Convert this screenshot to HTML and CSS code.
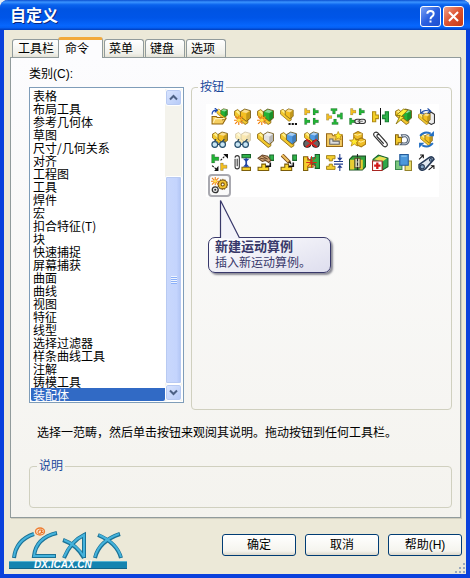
FILE: index.html
```html
<!DOCTYPE html>
<html lang="zh-CN">
<head>
    <meta charset="UTF-8">
    <meta name="viewport" content="width=device-width, initial-scale=1.0">
    <title>自定义</title>
    <link rel="stylesheet" href="styles.css">
</head>
<body>

    <!-- Shared icon pieces -->
    <svg class="defs" aria-hidden="true">
        <symbol id="part" viewBox="0 0 16 16">
            <path d="M.5 3l3-1.500L13 10v4l-2.500 1.500L.5 7z" fill="#f3c92f" stroke="#876310" stroke-width=".8"/>
            <path d="M1.500 3.200L10.500 11l2-1L3.500 2z" fill="#fff08c"/>
            <path d="M6 3.500l4-2.500 5.500 1.500v7l-4 3L6 8z" fill="currentColor" stroke="#6b5210" stroke-width=".8"/>
            <path d="M7 3.700l3.200-2.200 4.300 1.300-3 2z" fill="#fff" opacity=".5"/>
            <path d="M11.500 5.500v6.500l3.500-2.700V3z" opacity=".2"/>
        </symbol>
        <symbol id="tee" viewBox="0 0 7 8">
            <path d="M.5.5h2.500v2h3.500v3H3v2H.5z" fill="currentColor" stroke="#222" stroke-opacity=".4" stroke-width=".6"/>
        </symbol>
        <symbol id="spark" viewBox="0 0 9 9">
            <path d="M4.500 0v9M0 4.500h9M1 1l7 7M8 1L1 8" stroke="#f08010" stroke-width="1.100"/>
            <circle cx="4.500" cy="4.500" r="1.700" fill="#ffe14a"/>
        </symbol>
        <symbol id="glasses" viewBox="0 0 13 8">
            <path d="M2 4L4 .5M8 4l3-3.500M5 5h2" fill="none" stroke="#27425c"/>
            <circle cx="3" cy="5" r="2.400" fill="#c9e6f4" stroke="#27506e"/>
            <circle cx="9.500" cy="5" r="2.400" fill="#c9e6f4" stroke="#27506e"/>
        </symbol>
        <symbol id="star" viewBox="0 0 10 10">
            <path d="M5 .5l1.300 3 3.200.2L7 5.800l1 3.400-3-1.900-3 1.900 1-3.400L.5 3.700l3.200-.2z" fill="#ffe92e" stroke="#ad7a06" stroke-width=".7"/>
        </symbol>
        <symbol id="clip" viewBox="0 0 6 15">
            <path d="M1 4v7.500a2 2 0 004 0V3a2 2 0 00-4 0M3 4v7" fill="none" stroke="#333"/>
        </symbol>
        <symbol id="stairs" viewBox="0 0 15 10">
            <path d="M1 9.500v-3h3.500v-3H8v3h3v3z" fill="#f9d72f" stroke="#7b5c08"/>
            <path d="M8.500 5.500h4V2" fill="none" stroke="#111" stroke-width="1.500"/>
        </symbol>
    </svg>

    <div class="window">
        <header class="titlebar">
            <h1>自定义</h1>
            <button class="win-btn help" type="button" aria-label="帮助">
                <svg viewBox="0 0 21 21"><path d="M7 7.500q0-3 3.500-3t3.500 3q0 2-2 3.200-1.500 1-1.500 2.800M10.500 15v2.200" fill="none" stroke="#fff" stroke-width="2.200"/></svg>
            </button>
            <button class="win-btn close" type="button" aria-label="关闭">
                <svg viewBox="0 0 21 21"><path d="M5.500 5.500l10 10M15.500 5.500l-10 10" stroke="#fff" stroke-width="2.300"/></svg>
            </button>
        </header>

        <main>
            <div class="tabs" role="tablist">
                <button class="tab" role="tab" type="button">工具栏</button>
                <button class="tab active" role="tab" type="button" aria-selected="true">命令</button>
                <button class="tab" role="tab" type="button">菜单</button>
                <button class="tab" role="tab" type="button">键盘</button>
                <button class="tab" role="tab" type="button">选项</button>
            </div>

            <section class="panel">
                <div class="columns">
                    <div class="categories">
                        <label for="category">类别(C):</label>
                        <div class="listbox">
                            <select id="category" size="24">
                                <option>表格</option>
                                <option>布局工具</option>
                                <option>参考几何体</option>
                                <option>草图</option>
                                <option>尺寸/几何关系</option>
                                <option>对齐</option>
                                <option>工程图</option>
                                <option>工具</option>
                                <option>焊件</option>
                                <option>宏</option>
                                <option>扣合特征(T)</option>
                                <option>块</option>
                                <option>快速捕捉</option>
                                <option>屏幕捕获</option>
                                <option>曲面</option>
                                <option>曲线</option>
                                <option>视图</option>
                                <option>特征</option>
                                <option>线型</option>
                                <option>选择过滤器</option>
                                <option>样条曲线工具</option>
                                <option>注解</option>
                                <option>铸模工具</option>
                                <option selected>装配体</option>
                            </select>
                            <div class="scrollbar">
                                <button class="arrow" type="button" aria-label="向上"><svg viewBox="0 0 9 7"><path d="M1 5.500l3.500-3.500L8 5.500" fill="none" stroke="#4d6185" stroke-width="2"/></svg></button>
                                <div class="track"><div class="thumb"></div></div>
                                <button class="arrow" type="button" aria-label="向下"><svg viewBox="0 0 9 7"><path d="M1 1.500L4.500 5 8 1.500" fill="none" stroke="#4d6185" stroke-width="2"/></svg></button>
                            </div>
                        </div>
                    </div>

                    <fieldset class="commands">
                        <legend>按钮</legend>
                        <div class="icons">
                            <button type="button" aria-label="插入零部件"><svg viewBox="0 0 16 16"><use href="#part" class="green" x="5" width="11" height="11"/><path d="M1 15V8h4l1 1h5v2l3-1-3 5z" fill="#f6cf60" stroke="#91640d"/><path d="M2 14l2-4h9" fill="none" stroke="#fff2b8"/><path d="M1 6q0-4 4-4M3.500 0L6 2 3.500 4" fill="none" stroke="#1745b0"/></svg></button>
                            <button type="button" aria-label="新零件"><svg viewBox="0 0 16 16" class="yellow"><use href="#part"/><use href="#spark" x="0" y="7" width="9" height="9"/></svg></button>
                            <button type="button" aria-label="新装配体"><svg viewBox="0 0 16 16" class="green"><use href="#part"/><use href="#spark" x="0" y="7" width="9" height="9"/></svg></button>
                            <button type="button" aria-label="随配合复制"><svg viewBox="0 0 16 16" class="yellow"><use href="#part" width="13" height="13"/><path d="M8 14h2v2H8zM11 14h2v2h-2zM14 14h2v2h-2z" fill="#111"/></svg></button>
                            <button type="button" aria-label="线性阵列"><svg viewBox="0 0 16 16" class="green"><use href="#tee" class="yellow" x="1" width="6" height="7"/><use href="#tee" x="9" width="6" height="7"/><use href="#tee" x="1" y="9" width="6" height="7"/><use href="#tee" x="9" y="9" width="6" height="7"/></svg></button>
                            <button type="button" aria-label="圆周阵列"><svg viewBox="0 0 16 16" class="green"><use href="#tee" class="yellow" x="0" y="5" width="6" height="7"/><use href="#tee" x="0" y="5" width="6" height="7" transform="rotate(90 8 8)"/><use href="#tee" x="0" y="5" width="6" height="7" transform="rotate(180 8 8)"/><use href="#tee" x="0" y="5" width="6" height="7" transform="rotate(270 8 8)"/></svg></button>
                            <button type="button" aria-label="特征驱动阵列"><svg viewBox="0 0 16 16" class="green"><use href="#tee" class="yellow" x="1" width="6" height="7"/><use href="#tee" x="9" width="6" height="7"/><use href="#tee" x="0" y="9" width="6" height="7"/><rect x="5.500" y="10.500" width="6" height="4" rx="2" fill="#eee" stroke="#333"/><rect x="9.500" y="10.500" width="6" height="4" rx="2" fill="#eee" stroke="#333"/><path d="M8 12.500h5" stroke="#777"/></svg></button>
                            <button type="button" aria-label="镜向零部件"><svg viewBox="0 0 16 16"><path d="M.5 3.500h3v3H6v3.500H3.500v3h-3z" fill="#f4d028" stroke="#b08a12"/><path d="M15.500 3.500h-3v3H10v3.500h2.500v3h3z" fill="#2fb34a" stroke="#148030"/><path d="M8 0v16" stroke="#111" stroke-width="1"/></svg></button>
                            <button type="button" aria-label="智能零部件"><svg viewBox="0 0 16 16" class="green"><use href="#part"/><path d="M8 1L1 7h4l-4 8 8-7H6l6-6z" fill="#fff03b" stroke="#846c08" stroke-width=".8"/></svg></button>
                            <button type="button" aria-label="替换零部件"><svg viewBox="0 0 16 16"><path d="M9.500 6l3-2 3 2v8l-3 1.500-3-2z" fill="#eee" stroke="#333"/><use href="#part" class="yellow" y="4" width="12" height="12"/><path d="M3 5q2-4 8-2M2.500 1v4h3.500M9 .5l3 2.500-3 2" fill="none" stroke="#1b4aa1"/></svg></button>

                            <button type="button" aria-label="隐藏零部件"><svg viewBox="0 0 16 16" class="yellow"><use href="#part" x="1" width="15" height="15"/><use href="#glasses" x="0" y="7" width="15" height="9"/></svg></button>
                            <button type="button" aria-label="显示零部件"><svg viewBox="0 0 16 16" class="yellow"><g opacity=".35"><use href="#part" x="1" width="15" height="15"/></g><use href="#glasses" x="0" y="7" width="15" height="9"/></svg></button>
                            <button type="button" aria-label="压缩"><svg viewBox="0 0 16 16" class="white"><use href="#part"/></svg></button>
                            <button type="button" aria-label="解除压缩"><svg viewBox="0 0 16 16" class="blue"><use href="#part"/></svg></button>
                            <button type="button" aria-label="孤立"><svg viewBox="0 0 16 16" class="blue"><use href="#part" width="16" height="14"/><circle cx="4" cy="12" r="3.300" fill="#666" stroke="#222"/><circle cx="12" cy="12" r="3.300" fill="#666" stroke="#222"/><path d="M3 8l10 7M13 8L3 15" stroke="#d8201a" stroke-width="1.800"/></svg></button>
                            <button type="button" aria-label="编辑零部件"><svg viewBox="0 0 16 16"><path d="M.5 14.500v-12h5l1 2h9v10z" fill="#f5cb62" stroke="#966717"/><path d="M3.500 7.500h3v2h6v3h-9z" fill="#ddd" stroke="#666"/><use href="#star" x="7" width="9" height="9"/></svg></button>
                            <button type="button" aria-label="智能扣件"><svg viewBox="0 0 16 16"><g fill="#efbd27" stroke="#a87a12"><path d="M4.500 2.500l4-2 4 2v4l-4 2-4-2z"/><path d="M7.500 8.500l4-2 4 2v4l-4 2.500-4-2z"/></g><path d="M5 3l3 1 4-1.500M8 9l3 1.500L15 9" fill="none" stroke="#fff0a0"/><use href="#star" y="5" width="10" height="10"/></svg></button>
                            <button type="button" aria-label="配合"><svg viewBox="0 0 16 16"><path d="M12.500 9.500L5.500 1.800C3.500 0 .5 2 2 4.500l8.500 9.500c2 2 5 0 3.500-2.500L7 3.500C5.500 2.500 4 4 5 5.500l6 6.500" fill="none" stroke="#333" stroke-width="1.100"/></svg></button>
                            <button type="button" aria-label="磁力配合"><svg viewBox="0 0 16 16"><path d="M.5 3.500h2.500v2.500H6v5H3v2H.5z" fill="#f5cc31" stroke="#82610c"/><path d="M6 3.500h4a5 5 0 010 9.500H5l2-2q3 1 4.500-1 1-3-1.500-4.500-2-.5-3 .5z" fill="#e8edf3" stroke="#536275"/></svg></button>
                            <button type="button" aria-label="旋转零部件"><svg viewBox="0 0 16 16"><use href="#part" class="yellow" x="2" y="2" width="12" height="12"/><path d="M2 4.500q4-5 10-2M14 11.500q-4 5-10 2" fill="none" stroke="#2470c4" stroke-width="1.800"/><path d="M15 0v5h-5zM1 16v-5h5z" fill="#2470c4"/></svg></button>

                            <button type="button" aria-label="移动零部件"><svg viewBox="0 0 16 16"><use href="#tee" class="green" x="0" y="0" width="8" height="9"/><use href="#tee" class="yellow" x="8" y="8" width="8" height="8"/><path d="M9 6l5-5M1 11l5 4" fill="none" stroke="#111" stroke-dasharray="2 1"/><path d="M11.500 0H16v4.500zM7 11v5H3z" fill="#111"/></svg></button>
                            <button type="button" aria-label="高级配合"><svg viewBox="0 0 16 16"><use href="#clip" width="6" height="16"/><path d="M7.500.5h8v3h-8z" fill="#2fb34a" stroke="#176329"/><path d="M7.500 12.500h8v3h-8z" fill="#f5cf2e" stroke="#7e610b"/><path d="M11.500 4v8" stroke="#2346a3" stroke-width="1.600"/><path d="M8.500 4.500h6l-3 3zM8.500 12h6l-3-3z" fill="#2346a3"/></svg></button>
                            <button type="button" aria-label="拖动草图"><svg viewBox="0 0 16 16"><use href="#stairs" y="6" width="15" height="10"/><path d="M12 1h4v5h-4z" fill="#2fb34a" stroke="#176329"/><path d="M1 4l4-3 5 1 3 4-2 2-3-2-3 1z" fill="#d7aa79" stroke="#684629"/><path d="M3 4l5 1M5 2l5 3" stroke="#684629"/></svg></button>
                            <button type="button" aria-label="编辑草图"><svg viewBox="0 0 16 16"><use href="#stairs" y="6" width="15" height="10"/><path d="M12 1h4v5h-4z" fill="#2fb34a" stroke="#176329"/><path d="M2 1l7 7" stroke="#754615" stroke-width="3.500"/><path d="M2 1l6 6" stroke="#f1c35f" stroke-width="2"/><path d="M8 8l3 2-1-3z" fill="#222"/></svg></button>
                            <button type="button" aria-label="干涉检查"><svg viewBox="0 0 16 16"><path d="M.5 2.500h4v3h5v7h-5v3h-4z" fill="#f5cf2e" stroke="#7e610b"/><path d="M15.500.500h-4v3h-4v6h4v4h4z" fill="#2fb34a" stroke="#176329"/><path d="M4 3l8 9M12 3L4 12M8 2v11M3 8h10" stroke="#d92717" stroke-width=".9"/></svg></button>
                            <button type="button" aria-label="间隙验证"><svg viewBox="0 0 16 16"><path d="M.5 1.500h8v3h-2.500v2H3v-2H.5zM.5 14.500h8v-3h-2.500v-2H3v2H.5z" fill="#f5cf2e" stroke="#9a780f" stroke-width=".8"/><path d="M7.500 7h8.500M7.500 9.500h8.500M13 0v4M13 12v4" stroke="#203c8c"/><path d="M10.500 3.500h5L13 6.500zM10.500 13h5L13 10z" fill="#203c8c"/></svg></button>
                            <button type="button" aria-label="孔对齐"><svg viewBox="0 0 16 16"><path d="M.5 5l3-3h12v10l-3 3H.5z" fill="#2fa33f" stroke="#1a5123"/><path d="M1 5.500h4v9H1zM10 5.500h3v9h-3z" fill="#e8cd31"/><path d="M5.500 4h5v9h-5z" fill="#d6d6b9" stroke="#624f20"/><path d="M8 0v16" stroke="#222" stroke-dasharray="3 1"/></svg></button>
                            <button type="button" aria-label="装配体直观"><svg viewBox="0 0 16 16"><path d="M1 5l5-4 9 3v8l-5 3-9-2z" fill="#2fa84a" stroke="#195d2a"/><path d="M2 5l5-3 7 2-4 3z" fill="#eadf55"/><path d="M10 7v8" stroke="#195d2a"/><path d="M.5 6.500h9v9h-9z" fill="#fff" stroke="#a82722"/><path d="M5 8v6M2 11h6" stroke="#d51919" stroke-width="2.200"/></svg></button>
                            <button type="button" aria-label="布局"><svg viewBox="0 0 16 16"><path d="M.5 6.500h6v8h-6z" fill="#7cc880" stroke="#39864d"/><path d="M9.500 6.500h6v9h-6z" fill="#ebdf6d" stroke="#95832b"/><path d="M4.500.5h8v10h-8z" fill="#4b98db" stroke="#245b9b"/><path d="M6 2h5" stroke="#9bd0f4"/></svg></button>
                            <button type="button" aria-label="皮带/链"><svg viewBox="0 0 16 16"><path d="M1 10L11 3q3-1 4 2L7 14q-4 3-6-1z" fill="#e1e8f0" stroke="#263a57" stroke-width="1.500"/><circle cx="4" cy="12" r="2" fill="#87a8c7" stroke="#263a57"/><circle cx="12" cy="5.500" r="1.300" fill="#87a8c7" stroke="#263a57"/><path d="M1 5l4-4M2 1h3v3M10 15l5-4M15 14v-3h-3" fill="none" stroke="#111"/></svg></button>

                            <div class="anchor">
                                <button class="current" type="button" aria-describedby="tip" aria-label="新建运动算例"><svg viewBox="0 0 16 16"><circle cx="11" cy="7" r="4.200" fill="#f2c331" stroke="#77520a" stroke-width="1"/><circle cx="11" cy="7" r="4.800" fill="none" stroke="#77520a" stroke-width=".8" stroke-dasharray="1.200 1.200"/><circle cx="11" cy="7" r="1.500" fill="#fff" stroke="#77520a"/><circle cx="4" cy="12" r="2.800" fill="#eee" stroke="#333" stroke-width="1.200"/><circle cx="4" cy="12" r="1" fill="#333"/><use href="#spark" x="0" y="0" width="8" height="8"/></svg></button>
                                <div class="tooltip" id="tip" role="tooltip">
                                    <svg class="pointer" viewBox="0 0 22 40"><path d="M1.500 39.500V1.500l19 37.500v1z" fill="#f3f3fa"/><path d="M1.500 39V1.500l19 37.500" fill="none" stroke="#38386a" stroke-width="1.200"/></svg>
                                    <strong>新建运动算例</strong>
                                    <span>插入新运动算例。</span>
                                </div>
                            </div>
                        </div>
                    </fieldset>
                </div>

                <p class="hint">选择一范畴，然后单击按钮来观阅其说明。拖动按钮到任何工具栏。</p>

                <fieldset class="description">
                    <legend>说明</legend>
                </fieldset>
            </section>
        </main>

        <footer>
            <svg class="logo" viewBox="0 0 120 43" role="img" aria-label="iCAX">
                <g fill="none" stroke="#1a7296" stroke-width="4">
                    <path d="M5 31Q7 13 25 7"/>
                    <path d="M48 6Q27 11 25 29H47"/>
                    <path d="M55 31Q62 14 75 8V31M54 13Q68 18 75 31"/>
                    <path d="M86 31Q90 14 111 7M89 8Q108 16 112 31"/>
                </g>
                <g fill="none" stroke="#45b3dc" stroke-width="2">
                    <path d="M5 30Q7 13 25 7"/>
                    <path d="M47 6Q27 11 25 29H46"/>
                    <path d="M55 30Q62 14 75 8V30M55 13Q68 18 75 30"/>
                    <path d="M86 30Q90 14 110 7M90 8Q108 16 112 30"/>
                </g>
                <ellipse cx="31" cy="4.500" rx="4.500" ry="3.500" fill="#f9dfc5" stroke="#ee7d31" stroke-width="1.300"/>
                <path d="M33 3q-4-1-4 2t3 1l1-3-.5 3 2-1" fill="none" stroke="#e66e20"/>
                <path d="M0 34.500h118v7H0z" fill="#1584b0"/>
                <path d="M0 34.500h118" stroke="#58b4d2"/>
                <path d="M0 41.500h118" stroke="#126487"/>
                <text x="25" y="41">DX.ICAX.CN</text>
            </svg>
            <div class="actions">
                <button type="button">确定</button>
                <button type="button">取消</button>
                <button type="button">帮助(H)</button>
            </div>
            <svg class="grip" viewBox="0 0 11 11"><path d="M9 1h2v2H9zM9 5h2v2H9zM5 5h2v2H5zM9 9h2v2H9zM5 9h2v2H5zM1 9h2v2H1z" fill="#9aa9bd"/></svg>
        </footer>
    </div>

</body>
</html>
```
FILE: styles.css
```css
* {
    box-sizing: border-box;
}

body {
    margin: 0;
    background: #e4ecf4;
    font-family: "Liberation Sans", "Noto Sans CJK SC", sans-serif;
    font-size: 12px;
    color: #000;
}

button,
select {
    font: inherit;
    color: inherit;
    padding: 0;
}

svg {
    display: block;
}

.defs {
    position: absolute;
    width: 0;
    height: 0;
}

.window {
    min-height: 100vh;
    display: flex;
    flex-direction: column;
    background: #ece9d8;
    border: solid #0a41dc;
    border-width: 0 4px 4px;
    border-radius: 8px 8px 0 0;
}

/* Title bar */
.titlebar {
    display: flex;
    align-items: center;
    gap: 2px;
    height: 30px;
    margin: 0 -4px;
    padding: 2px 6px 0 10px;
    border-radius: 8px 8px 0 0;
    background: linear-gradient(#0a4fd0 0, #3a93ff 7%, #0a63ee 16%, #0054e3 30%, #0055e8 60%, #0666fd 85%, #0560f4 92%, #003dbb 100%);
}

.titlebar h1 {
    flex: 1;
    margin: 0;
    font-size: 16px;
    line-height: 24px;
    color: #fff;
    text-shadow: 1px 1px #0a2a80;
}

.win-btn {
    width: 21px;
    height: 21px;
    border: 1px solid #fff;
    border-radius: 3px;
}

.win-btn svg {
    width: 19px;
    height: 19px;
}

.help {
    background: linear-gradient(135deg, #7ba2f4, #2a5fe0 50%, #1d4fd0);
}

.close {
    background: linear-gradient(135deg, #f0a088, #dd5230 50%, #c43a14);
}

main {
    padding: 7px 5px 0 6px;
}

/* Tabs */
.tabs {
    display: flex;
    align-items: flex-end;
    gap: 1px;
    height: 20px;
    padding-left: 2px;
}

.tab {
    height: 18px;
    padding: 0 10px 0 4px;
    line-height: 16px;
    border: 1px solid #919b9c;
    border-bottom: 0;
    border-radius: 3px 3px 0 0;
    background: linear-gradient(#fff, #f0f0ea 80%, #e3e1d5);
}

.tab:first-child {
    margin-right: -3px;
    padding: 0 5px;
}

.tab.active {
    position: relative;
    z-index: 1;
    height: 21px;
    margin-bottom: -1px;
    padding: 0 13px 0 6px;
    border-top: 3px solid #f2a93b;
    background: #fcfcfe;
}

.panel {
    padding: 7px 8px 9px 18px;
    border: 1px solid #919b9c;
    background: linear-gradient(#fcfcfe, #f4f3ee);
    box-shadow: 1px 1px #d0cebf;
}

.columns {
    display: flex;
    gap: 7px;
}

/* Category list */
.categories {
    flex: 0 0 155px;
    padding-bottom: 7px;
}

.categories label {
    display: block;
    margin-bottom: 4px;
    line-height: 18px;
}

.listbox {
    display: flex;
    height: 316px;
    padding: 1px;
    border: 1px solid #7f9db9;
    background: #fff;
}

.listbox select {
    flex: 1;
    min-width: 0;
    height: 312px;
    border: 0;
    outline: 0;
    background: #fff;
    font-family: "Noto Sans CJK SC", sans-serif;
    overflow: hidden;
}

.listbox option {
    display: flex;
    align-items: center;
    height: 13px;
    min-height: 13px;
    padding: 0 2px;
    line-height: 13px;
    overflow: visible;
}

.listbox option:checked {
    background: linear-gradient(#316ac5, #316ac5);
    -webkit-text-fill-color: #fff;
}

.scrollbar {
    display: flex;
    flex-direction: column;
    width: 17px;
    background: #f4f3ec;
}

.arrow {
    display: grid;
    place-items: center;
    height: 17px;
    border: 1px solid #fff;
    border-radius: 3px;
    background: linear-gradient(135deg, #dbe6ff, #b5c9f7);
    box-shadow: inset 0 0 0 1px #b8caf2;
}

.arrow svg {
    width: 9px;
    height: 7px;
}

.track {
    flex: 1;
    display: flex;
    align-items: flex-end;
}

.thumb {
    width: 100%;
    height: 75%;
    border: 1px solid #fff;
    border-radius: 2px;
    background:
        repeating-linear-gradient(#eef4fe 0 1px, #8cb0f8 1px 2px) center / 6px 8px no-repeat,
        linear-gradient(90deg, #c9d8fc, #c4d4fd 70%, #b0c4f4);
    box-shadow: inset 0 0 0 1px #b8caf2;
}

/* Group boxes */
fieldset {
    min-width: 0;
    margin: 0;
    border: 1px solid #d0d0bf;
    border-radius: 4px;
}

legend {
    padding: 0 2px;
    line-height: 14px;
    color: #1b4a9c;
}

.commands {
    flex: 1;
    margin-top: 15px;
    padding: 10px 12px 0 14px;
}

.commands legend {
    margin-left: -8px;
}

.icons {
    display: grid;
    grid-template-columns: repeat(auto-fill, 23px);
    grid-auto-rows: 23px;
    padding: 1px 0 0 2px;
    background: #fff;
}

.icons button {
    display: grid;
    place-items: center;
    width: 23px;
    height: 23px;
    border: 0;
    background: none;
}

.icons button > svg {
    width: 17px;
    height: 17px;
}

.icons .current {
    border: 2px solid #a9a9b0;
    border-radius: 4px;
    background: #fafafa;
}

.yellow { color: #f3bf22; }
.green { color: #22b436; }
.blue { color: #4f9be6; }
.white { color: #e3e3e3; }

/* Balloon */
.anchor {
    position: relative;
}

.tooltip {
    position: absolute;
    top: 63px;
    left: 0;
    width: 123px;
    padding: 1px 6px;
    border: 1px solid #38386a;
    border-radius: 7px;
    background: linear-gradient(160deg, #fff, #dedeee);
    box-shadow: 2px 2px 2px #8c8c96;
    color: #38386a;
    line-height: 16px;
    white-space: nowrap;
}

.tooltip strong,
.tooltip span {
    display: block;
}

.tooltip strong {
    font-size: 13px;
}

.pointer {
    position: absolute;
    top: -39px;
    left: 10px;
    width: 22px;
    height: 40px;
}

.hint {
    margin: 14px 0 17px 8px;
    line-height: 18px;
}

.description {
    height: 49px;
    padding: 0 7px;
}

/* Footer */
footer {
    position: relative;
    flex: 1;
    display: flex;
    justify-content: space-between;
    align-items: flex-start;
    padding: 9px 4px 4px 5px;
}

.logo {
    width: 120px;
    height: 43px;
}

.logo text {
    font: italic bold 10px "Liberation Sans", sans-serif;
    fill: #fff;
}

.actions {
    display: flex;
    gap: 9px;
    margin-top: 7px;
}

.actions button {
    width: 74px;
    height: 22px;
    line-height: 18px;
    border: 1px solid #003c74;
    border-radius: 3px;
    background: linear-gradient(#fff, #f5f4ee 80%, #dcd8cb);
}

.grip {
    position: absolute;
    right: 1px;
    bottom: 1px;
    width: 11px;
    height: 11px;
}
```
